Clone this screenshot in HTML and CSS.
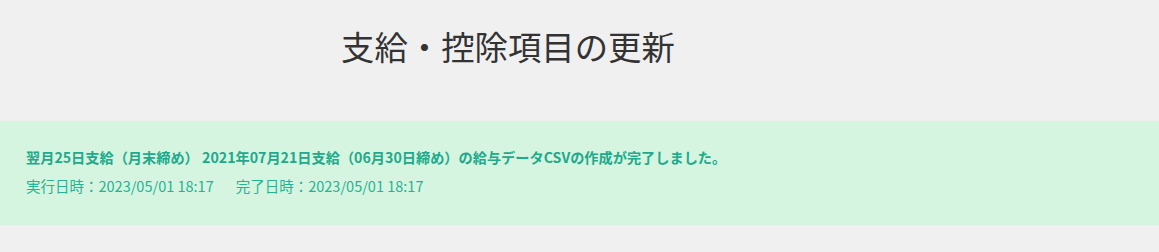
FILE: index.html
```html
<!DOCTYPE html>
<html lang="ja">
<head>
<meta charset="utf-8">
<link rel="stylesheet" href="styles.css">
</head>
<body>
<header class="page-header">
  <h1 class="page-title">支給・控除項目の更新</h1>
</header>
<section class="notice">
  <p class="notice-title">翌月25日支給（月末締め） 2021年07月21日支給（06月30日締め）の給与データCSVの作成が完了しました。</p>
  <p class="notice-meta"><span class="meta-item">実行日時：2023/05/01 18:17</span><span class="meta-item">完了日時：2023/05/01 18:17</span></p>
</section>
</body>
</html>
```
FILE: styles.css
```css
html, body {
  margin: 0;
  padding: 0;
  background: #f0f0f0;
  font-family: "Noto Sans CJK JP", "Noto Sans", sans-serif;
}
.page-header {
  height: 121px;
  box-sizing: border-box;
  padding: 23px 0 0 341px;
}
.page-title {
  margin: 0;
  font-size: 33.4px;
  font-weight: 400;
  line-height: 46px;
  color: #333333;
}
.notice {
  background: #d5f5e1;
  height: 104px;
  box-sizing: border-box;
  padding: 26px 26px 0;
}
.notice-title {
  margin: 0;
  font-size: 14.2px;
  font-weight: 700;
  line-height: 20px;
  color: #21a98b;
}
.notice-meta {
  margin: 9px 0 0;
  font-size: 14.5px;
  line-height: 20px;
  color: #26b394;
  display: flex;
  gap: 22px;
}
```
